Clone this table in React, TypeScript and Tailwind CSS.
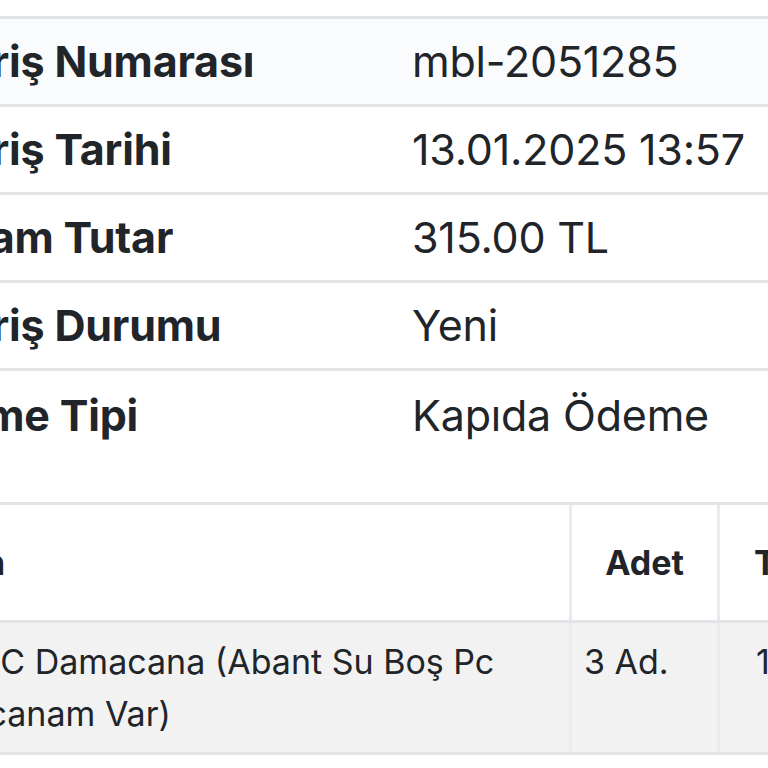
import React from "react";

const rows = [
  { label: "Sipariş Numarası", value: "mbl-2051285" },
  { label: "Sipariş Tarihi", value: "13.01.2025 13:57" },
  { label: "Toplam Tutar", value: "315.00 TL" },
  { label: "Sipariş Durumu", value: "Yeni" },
  { label: "Ödeme Tipi", value: "Kapıda Ödeme" },
];

const App = () => {
  return (
    <div className="w-[768px] h-[768px] overflow-hidden bg-white text-[#212529] font-['Inter','Noto_Sans',sans-serif]">
      <div className="ml-[-120px] w-[1100px] pt-[16px]">
        {/* order info table */}
        <div className="border-t-[3px] border-[#e2e4e7]">
          {rows.map((row, index) => (
            <div
              key={row.label}
              className={
                index === 0
                  ? "flex items-center h-[88px] border-b-[3px] border-[#e2e4e7] bg-[#fafbfc]"
                  : index === rows.length - 1
                  ? "flex items-center h-[88px]"
                  : "flex items-center h-[88px] border-b-[3px] border-[#e2e4e7]"
              }
            >
              <div className="w-[532px] pl-[20px] text-[43px] font-bold tracking-[-0.2px]">
                {row.label}
              </div>
              <div className="text-[43px] tracking-[-0.2px]">{row.value}</div>
            </div>
          ))}
        </div>

        {/* products table */}
        <div className="mt-[43px] border-t-[3px] border-[#e2e4e7]">
          <div className="flex h-[118px] border-b-[3px] border-[#e2e4e7] text-[34px] font-bold">
            <div className="w-[692px] flex items-center pl-[44px] border-r-[3px] border-[#e9ebee]">
              Ürün
            </div>
            <div className="w-[148px] flex items-center justify-center border-r-[3px] border-[#e9ebee]">
              Adet
            </div>
            <div className="w-[200px] flex items-center pl-[34px]">Tutar</div>
          </div>
          <div className="flex h-[132px] bg-[#f2f2f3] border-b-[3px] border-[#e2e4e7] text-[34px] leading-[52px]">
            <div className="w-[692px] pl-[15px] pt-[13px] border-r-[3px] border-[#e9ebee]">
              19 Lt PC Damacana (Abant Su Boş Pc
              <br />
              Damacanam Var)
            </div>
            <div className="w-[148px] pl-[12px] pt-[13px] border-r-[3px] border-[#e9ebee]">
              3 Ad.
            </div>
            <div className="w-[200px] pl-[36px] pt-[13px] whitespace-nowrap">105.00 TL</div>
          </div>
        </div>
      </div>
    </div>
  );
};

export default App;
